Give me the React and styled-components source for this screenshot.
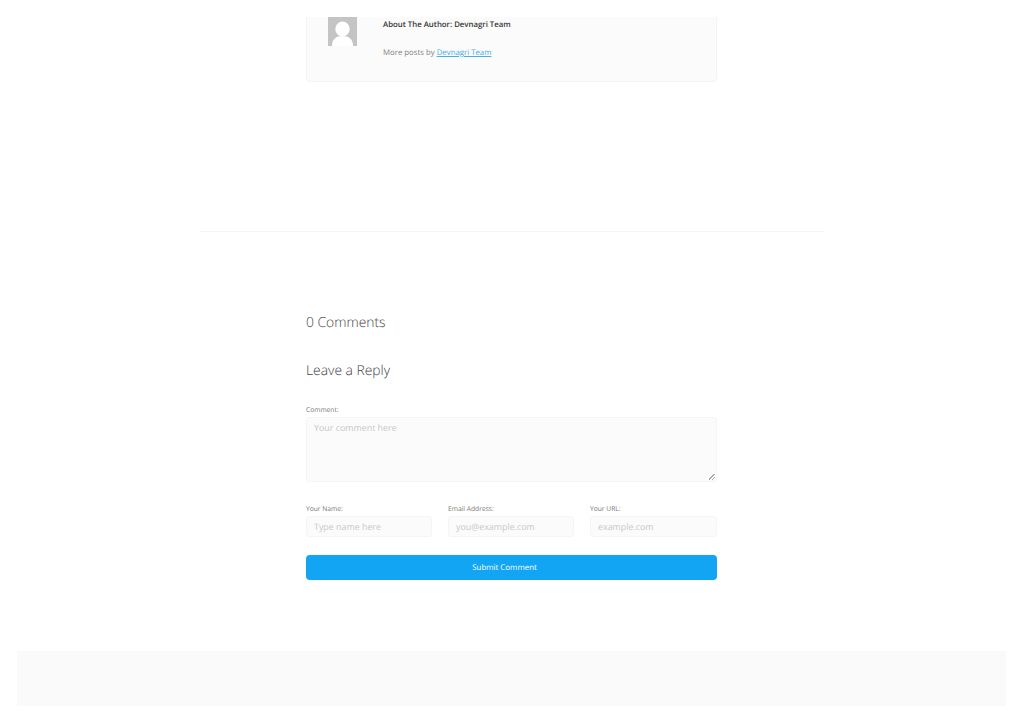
import React from "react";
import styled, { createGlobalStyle } from "styled-components";

const Global = createGlobalStyle`
  html, body { margin: 0; padding: 0; background: #fff; }
  body { font-family: "Open Sans", "Liberation Sans", sans-serif; color: #555; overflow: hidden; text-rendering: geometricPrecision; }
  input, textarea, button { text-rendering: geometricPrecision; }
  * { box-sizing: border-box; }
`;
const Page = styled.div`
  height: 723px;
  padding-top: 17px;
  display: flex;
  flex-direction: column;
  align-items: center;
`;
const Column = styled.div`
  width: 411px;
  margin-left: -1px;
  display: flex;
  flex-direction: column;
`;
const AuthorCard = styled.section`
  height: 65px;
  background: #fbfbfb;
  border: 1px solid #f4f4f4;
  border-top: 0;
  border-radius: 0 0 4px 4px;
  padding-left: 21px;
  display: flex;
  gap: 26px;
`;
const Avatar = styled.svg`
  width: 29px;
  height: 29px;
  display: block;
  flex: none;
`;
const AuthorText = styled.div`
  padding-top: 1px;
  display: flex;
  flex-direction: column;
`;
const AuthorTitle = styled.h4`
  margin: 0;
  font-size: 7.8px;
  line-height: 14px;
  font-weight: 600;
  color: #333;
`;
const AuthorMore = styled.p`
  margin: 14px 0 0;
  font-size: 7.8px;
  line-height: 14px;
  color: #808080;
  a { color: #45aee8; text-decoration: underline; }
`;
const Divider = styled.hr`
  width: 624px;
  height: 1px;
  margin: 149px 0 0;
  border: 0;
  background: #f4f4f4;
`;
const Heading = styled.h3`
  margin: ${(p) => p.$top}px 0 0;
  font-size: 13.85px;
  line-height: 20px;
  font-weight: 300;
  color: #444;
`;
const Form = styled.form`
  margin-top: 24px;
  display: flex;
  flex-direction: column;
`;
const Label = styled.label`
  display: block;
  font-size: 6.7px;
  line-height: 10px;
  color: #777;
  margin-bottom: 2px;
`;
const fieldStyles = `
  display: block;
  width: 100%;
  background: #fbfbfb;
  border: 1px solid #f5f5f5;
  border-radius: 3px;
  outline: none;
  font-family: "Open Sans", "Liberation Sans", sans-serif;
  font-size: 8.9px;
  color: #555;
  padding: 0 7px;
  &::placeholder { color: #c8c8c8; opacity: 1; }
`;
const CommentArea = styled.textarea`
  ${fieldStyles}
  height: 65px;
  padding-top: 3px;
  line-height: 14px;
  &::-webkit-resizer {
    background: linear-gradient(135deg, transparent 40%, #aaa 40%, #aaa 52%, transparent 52%, transparent 70%, #aaa 70%, #aaa 82%, transparent 82%) no-repeat right 1px bottom 1px / 6px 6px;
  }
`;
const Row = styled.div`
  margin-top: 22px;
  display: grid;
  grid-template-columns: 126px 126px 127px;
  gap: 16px;
`;
const Input = styled.input`
  ${fieldStyles}
  height: 21px;
`;
const Submit = styled.button`
  margin-top: 18px;
  height: 25px;
  width: 100%;
  border: 0;
  border-radius: 4px;
  background: #12a5f4;
  color: #fff;
  font-family: "Open Sans", "Liberation Sans", sans-serif;
  font-size: 7.9px;
  padding: 0 14px 0 0;
`;
const FooterBand = styled.footer`
  margin-top: 71px;
  width: 989px;
  height: 55px;
  margin-left: -1px;
  background: #fafafa;
`;

export default function App() {
  return (
    <Page>
      <Global />
      <Column>
        <AuthorCard>
          <Avatar viewBox="0 0 29 29">
            <rect width="29" height="29" fill="#c4c4c4" />
            <ellipse cx="14.5" cy="12" rx="7.2" ry="7.5" fill="#fff" />
            <path d="M4 29c0-7 4-10 10.5-10S25 22 25 29z" fill="#fff" />
          </Avatar>
          <AuthorText>
            <AuthorTitle>About The Author: Devnagri Team</AuthorTitle>
            <AuthorMore>
              More posts by <a href="#a">Devnagri Team</a>
            </AuthorMore>
          </AuthorText>
        </AuthorCard>
      </Column>
      <Divider />
      <Column>
        <Heading $top={81}>0 Comments</Heading>
        <Heading $top={28}>Leave a Reply</Heading>
        <Form onSubmit={(e) => e.preventDefault()}>
          <Label>Comment:</Label>
          <CommentArea placeholder="Your comment here" />
          <Row>
            <div>
              <Label>Your Name:</Label>
              <Input placeholder="Type name here" />
            </div>
            <div>
              <Label>Email Address:</Label>
              <Input placeholder="you@example.com" />
            </div>
            <div>
              <Label>Your URL:</Label>
              <Input placeholder="example.com" />
            </div>
          </Row>
          <Submit type="submit">Submit Comment</Submit>
        </Form>
      </Column>
      <FooterBand />
    </Page>
  );
}
